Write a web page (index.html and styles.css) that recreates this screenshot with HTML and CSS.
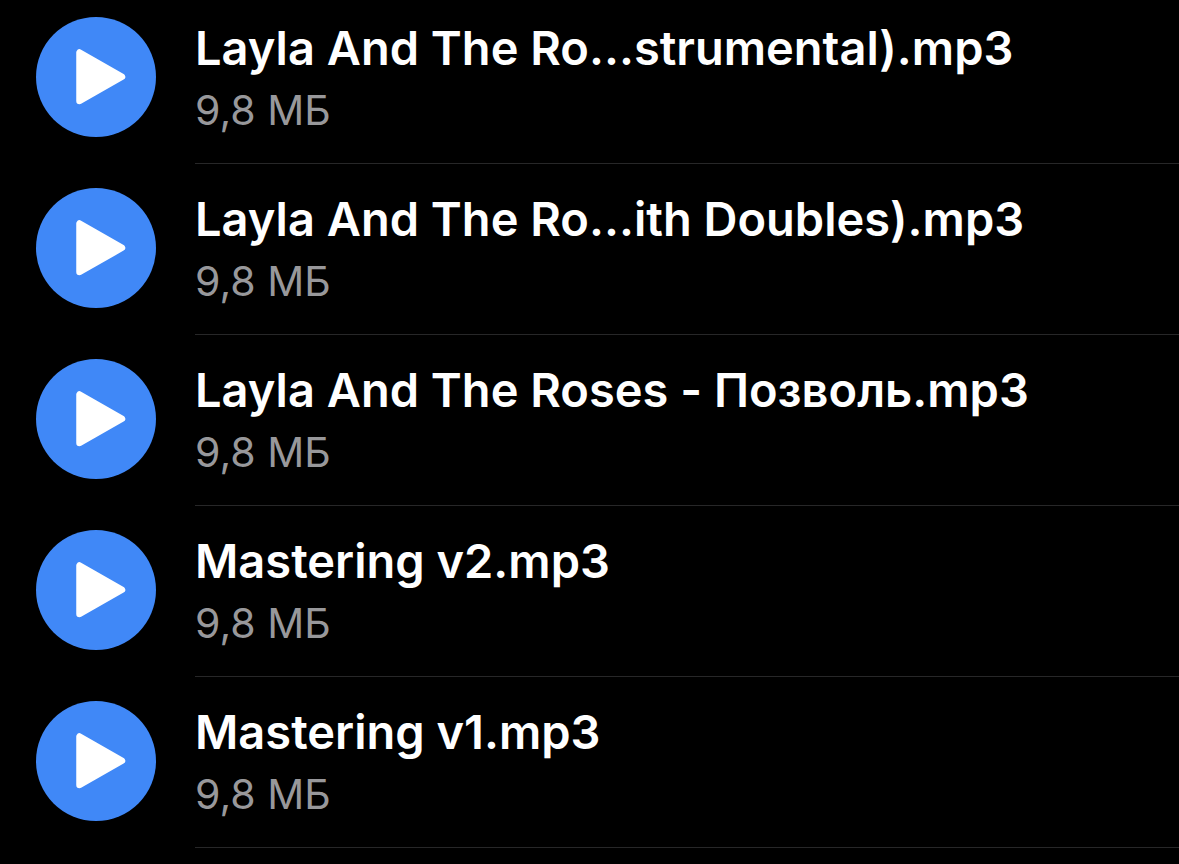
FILE: index.html
```html
<!DOCTYPE html>
<html lang="ru">
<head>
<meta charset="utf-8">
<meta name="viewport" content="width=device-width, initial-scale=1">
<title>Layla And The Roses</title>
<link rel="stylesheet" href="styles.css">
</head>
<body>
<svg class="sprite" aria-hidden="true"><symbol id="play" viewBox="0 0 120 120"><path d="M43.500 35.500V84L86 59.800Z" fill="currentColor" stroke="currentColor" stroke-width="6.500" stroke-linejoin="round"/></symbol></svg>
<ul class="files">
<li class="file"><button class="play" type="button" aria-label="Play"><svg class="icon"><use href="#play"/></svg></button><div class="info"><span class="name">Layla And The Ro...strumental).mp3</span><span class="size">9,8 МБ</span></div></li>
<li class="file"><button class="play" type="button" aria-label="Play"><svg class="icon"><use href="#play"/></svg></button><div class="info"><span class="name">Layla And The Ro...ith Doubles).mp3</span><span class="size">9,8 МБ</span></div></li>
<li class="file"><button class="play" type="button" aria-label="Play"><svg class="icon"><use href="#play"/></svg></button><div class="info"><span class="name">Layla And The Roses - Позволь.mp3</span><span class="size">9,8 МБ</span></div></li>
<li class="file"><button class="play" type="button" aria-label="Play"><svg class="icon"><use href="#play"/></svg></button><div class="info"><span class="name">Mastering v2.mp3</span><span class="size">9,8 МБ</span></div></li>
<li class="file"><button class="play" type="button" aria-label="Play"><svg class="icon"><use href="#play"/></svg></button><div class="info"><span class="name">Mastering v1.mp3</span><span class="size">9,8 МБ</span></div></li>
</ul>
</body>
</html>
```
FILE: styles.css
```css
* { box-sizing: border-box; }
body { margin: 0; background: #000; font-family: Inter, "Noto Sans", sans-serif; }
.sprite { display: none; }
.files { list-style: none; margin: 0; padding: 0; }
.file { display: flex; gap: 39px; padding-left: 36px; }
.play { flex: none; width: 120px; height: 120px; margin: 17px 0 0; padding: 0; border: 0; border-radius: 50%; background: #4088f7; color: #fff; cursor: pointer; }
.icon { display: block; width: 100%; height: 100%; }
.info { flex: 1; min-width: 0; display: flex; flex-direction: column; gap: 2px; padding: 18px 0 23px; border-bottom: 1px solid #272728; }
.file + .file .play { margin-top: 24px; }
.file + .file .info { padding-top: 25px; }
.name, .size { white-space: nowrap; line-height: 60px; }
.name { font-size: 47px; font-weight: 600; color: #fff; }
.size { font-size: 41px; color: #98989b; }
```
